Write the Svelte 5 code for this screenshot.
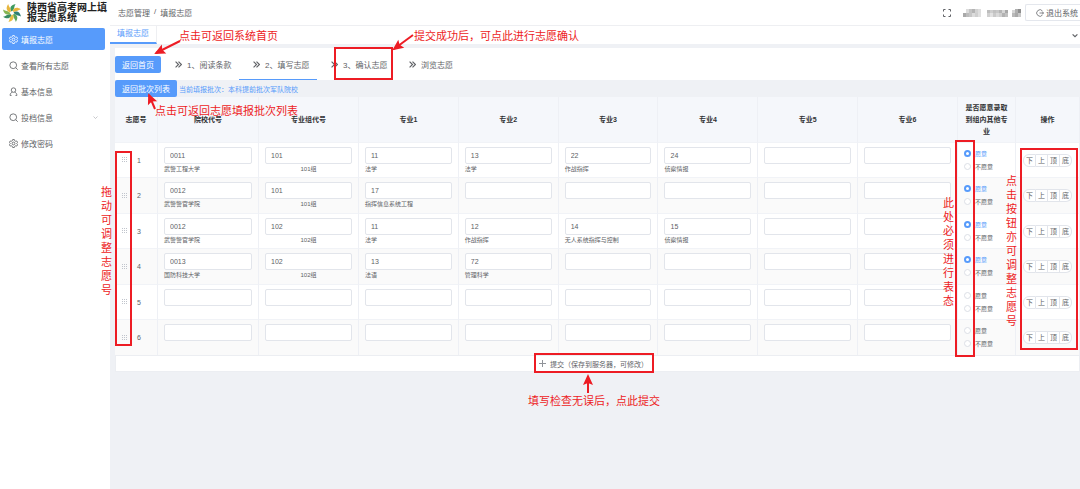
<script lang="ts">
	type Fila = {
		numero: number;
		escuela: [string, string];
		grupo: [string, string];
		majors: [string, string][];
		acepta: string;
	}

	const vacio: [string, string] = ['', ''];

	let filas: Fila[] = $state([
		{ numero: 1, escuela: ['0011', '武警工程大学'], grupo: ['101', '101组'], majors: [['11', '法学'], ['13', '法学'], ['22', '作战指挥'], ['24', '侦察情报'], vacio, vacio], acepta: '愿意' },
		{ numero: 2, escuela: ['0012', '武警警官学院'], grupo: ['101', '101组'], majors: [['17', '指挥信息系统工程'], vacio, vacio, vacio, vacio, vacio], acepta: '愿意' },
		{ numero: 3, escuela: ['0012', '武警警官学院'], grupo: ['102', '102组'], majors: [['11', '法学'], ['12', '作战指挥'], ['14', '无人系统指挥与控制'], ['15', '侦察情报'], vacio, vacio], acepta: '愿意' },
		{ numero: 4, escuela: ['0013', '国防科技大学'], grupo: ['102', '102组'], majors: [['13', '法语'], ['72', '管理科学'], vacio, vacio, vacio, vacio], acepta: '愿意' },
		{ numero: 5, escuela: vacio, grupo: vacio, majors: [vacio, vacio, vacio, vacio, vacio, vacio], acepta: '' },
		{ numero: 6, escuela: vacio, grupo: vacio, majors: [vacio, vacio, vacio, vacio, vacio, vacio], acepta: '' }
	]);

	const menu = [
		{ texto: '填报志愿', icono: 'gear' },
		{ texto: '查看所有志愿', icono: 'search' },
		{ texto: '基本信息', icono: 'user' },
		{ texto: '投档信息', icono: 'search', hijos: true },
		{ texto: '修改密码', icono: 'gear' }
	];

	const pasos = ['1、阅读条款', '2、填写志愿', '3、确认志愿', '浏览志愿'];
	const acciones = ['下', '上', '顶', '底'];
	const petalos = [0, 45, 90, 135, 180, 225, 270, 315];
	const colores = ['#3f9a5f', '#e9b53b', '#2d7f74', '#5ba55a', '#e8bd43', '#398b62', '#86b552', '#e7b63e'];

	// tonos del nombre de usuario oculto
	const mosaico = [
		[3, 0, '#dcdcdc'], [6, 0, '#c4c4c4'], [9, 0, '#b4b4b4'], [12, 0, '#d2d2d2'], [15, 0, '#dedede'],
		[0, 4, '#a9a9a9'], [3, 4, '#bcbcbc'], [6, 4, '#c6c6c6'], [9, 4, '#dcdcdc'], [12, 4, '#cfcfcf'], [15, 4, '#e0e0e0'],
		[24, 1, '#bdbdbd'], [27, 1, '#cecece'], [30, 1, '#c1c1c1'], [33, 1, '#c8c8c8'], [36, 1, '#b5b5b5'], [39, 1, '#d6d6d6'], [42, 1, '#a8a8a8'],
		[24, 4, '#d0d0d0'], [27, 4, '#e2e2e2'], [30, 4, '#cacaca'], [33, 4, '#dadada'], [36, 4, '#cecece'], [39, 4, '#b2b2b2'], [42, 4, '#c1c1c1'],
		[49, 1, '#d5d5d5'], [52, 0, '#b0b0b0'], [55, 0, '#8e8e8e'], [49, 4, '#b9b9b9'], [52, 4, '#a9a9a9'], [55, 4, '#c7c7c7']
	];

	function mover(i: number, accion: string): void {
		let destino = i;
		if (accion === '下') destino = Math.min(i + 1, filas.length - 1);
		if (accion === '上') destino = Math.max(i - 1, 0);
		if (accion === '顶') destino = 0;
		if (accion === '底') destino = filas.length - 1;
		const [fila] = filas.splice(i, 1);
		filas.splice(destino, 0, fila);
		filas.forEach((f, n) => (f.numero = n + 1));
	}
</script>

{#snippet icono(nombre: string)}
	<svg class="icono" viewBox="0 0 16 16" aria-hidden="true">
		{#if nombre === 'gear'}
			<path d="M6.5 1h3l.6 2 1.7 1 2-.5 1.500 2.600-1.400 1.500v1l1.400 1.400-1.500 2.600-2-.5-1.700 1-.6 2h-3l-.6-2-1.700-1-2 .5L.700 10l1.400-1.400v-1L.700 6.100l1.500-2.600 2 .5 1.700-1z" />
			<circle cx="8" cy="8" r="2.500" />
		{:else if nombre === 'search'}
			<circle cx="7.500" cy="7.500" r="6" />
			<path d="M12 12l3.500 3.500" />
		{:else}
			<circle cx="8" cy="5.500" r="4" />
			<path d="M2 15c0-3 1.500-5 4-6M14 15c0-3-1.500-5-4-6M2 15h2.500M11.500 15H14" />
		{/if}
	</svg>
{/snippet}

{#snippet casilla(valor: [string, string], etiqueta: string)}
	<input type="text" class="campo" value={valor[0]} aria-label={etiqueta} />
	<div class="nota">{valor[1]}</div>
{/snippet}

{#snippet flecha(x1: number, y1: number, x2: number, y2: number)}
	<path d="M{x1} {y1}L{x2} {y2}" />
	<path class="punta" d="M2 0L-9 -5L-7 0L-9 5Z" transform="translate({x2} {y2}) rotate({Math.atan2(y2 - y1, x2 - x1) * 180 / Math.PI})" />
{/snippet}

<div class="pantalla">
	<aside class="lateral">
		<div class="marca">
			<svg class="logo" viewBox="-10 -10 20 20" aria-hidden="true">
				{#each petalos as angulo, i}
					<path d="M-1 -2C-3 -6 -1 -9 4 -10C2 -7 3 -4 0 -2Z" fill={colores[i]} transform="rotate({angulo})" />
				{/each}
			</svg>
			<h1>陕西省高考网上填报志愿系统</h1>
		</div>
		<nav>
			{#each menu as m, i}
				<a href="#menu{i}" class="opcion" class:activa={i === 0}>
					{@render icono(m.icono)}
					<span>{m.texto}</span>
					{#if m.hijos}
						<svg class="flecha-menu" viewBox="0 0 10 6" aria-hidden="true"><path d="M1 1l4 4 4-4" /></svg>
					{/if}
				</a>
			{/each}
		</nav>
	</aside>

	<main>
		<header class="cabecera">
			<div class="migas">
				<a href="#gestion">志愿管理</a><span>/</span><span>填报志愿</span>
			</div>
			<div class="usuario">
				<svg class="expandir" viewBox="0 0 8 8" aria-hidden="true">
					<path d="M.500 2.500v-2h2M5.500.500h2v2M7.500 5.500v2h-2M2.500 7.500h-2v-2" />
				</svg>
				<svg class="mosaico" viewBox="0 0 58 8" aria-hidden="true">
					{#each mosaico as [x, y, color]}
						<rect {x} {y} width="3" height="4" fill={color} />
					{/each}
				</svg>
				<button class="salir">
					<svg viewBox="0 0 16 16" aria-hidden="true"><path d="M13 4A6.500 6.500 0 1 0 13 12M7 8h8M12.500 5.500L15 8l-2.500 2.500" /></svg>
					退出系统
				</button>
			</div>
		</header>

		<div class="pestanas">
			<a href="#llenar" class="pestana">填报志愿</a>
			<svg class="desplegar" viewBox="0 0 10 8" aria-hidden="true"><path d="M1 2l4 4 4-4" /></svg>
		</div>

		<div class="contenido">
			<div class="pasos">
				<button class="btn-primary">返回首页</button>
				{#each pasos as paso, i}
					<a href="#paso{i}" class="paso" class:actual={i === 1}>
						<svg viewBox="0 0 12 12" aria-hidden="true"><path d="M1 1l5 5-5 5M6 1l5 5-5 5" /></svg>
						{paso}
					</a>
				{/each}
			</div>

			<div class="lote">
				<button class="btn-primary">返回批次列表</button>
				<span>当前填报批次：本科提前批次军队院校</span>
			</div>

			<table>
				<colgroup>
					<col class="c-numero" />
					<col class="c-escuela" />
					<col class="c-grupo" />
					<col span="6" />
					<col class="c-acepta" />
					<col class="c-acciones" />
				</colgroup>
				<thead>
					<tr>
						<th>志愿号</th>
						<th>院校代号</th>
						<th>专业组代号</th>
						{#each [1, 2, 3, 4, 5, 6] as n}
							<th>专业{n}</th>
						{/each}
						<th>是否愿意录取到组内其他专业</th>
						<th>操作</th>
					</tr>
				</thead>
				<tbody>
					{#each filas as fila, i (fila)}
						<tr>
							<td class="orden">
								<div>
									<svg viewBox="0 0 5 6" aria-hidden="true">
										{#each [0, 2, 4] as y}
											<path d="M0 {y}h1v1h-1zM2 {y}h1v1h-1zM4 {y}h1v1h-1z" />
										{/each}
									</svg>
									<span>{fila.numero}</span>
								</div>
							</td>
							<td>{@render casilla(fila.escuela, '院校代号')}</td>
							<td class="grupo">{@render casilla(fila.grupo, '专业组代号')}</td>
							{#each fila.majors as major, n}
								<td>{@render casilla(major, `专业${n + 1}`)}</td>
							{/each}
							<td class="acepta">
								{#each ['愿意', '不愿意'] as opcion}
									<label class:elegida={fila.acepta === opcion}>
										<input type="radio" value={opcion} bind:group={fila.acepta} />
										{opcion}
									</label>
								{/each}
							</td>
							<td class="acciones">
								<div>
									{#each acciones as accion}
										<button onclick={() => mover(i, accion)}>{accion}</button>
									{/each}
								</div>
							</td>
						</tr>
					{/each}
				</tbody>
			</table>

			<button class="enviar">
				<svg viewBox="0 0 7 7" aria-hidden="true"><path d="M3.500 0v7M0 3.500h7" /></svg>
				提交（保存到服务器，可修改）
			</button>
		</div>
	</main>

	<!-- Indicaciones en rojo sobre la pantalla -->
	<svg class="marcas" width="1080" height="489" aria-hidden="true">
		<rect x="335" y="48" width="57" height="31" />
		<rect x="116" y="152" width="15" height="193" />
		<rect x="956" y="141" width="18" height="215" />
		<rect x="1021" y="149" width="56" height="200" />
		<rect x="535" y="354" width="118" height="18" />
		{@render flecha(180, 41, 156, 53)}
		{@render flecha(155, 109, 149, 95)}
		{@render flecha(413, 35, 394, 49)}
		{@render flecha(588, 393, 588, 376)}
	</svg>
	<p class="aviso inicio">点击可返回系统首页</p>
	<p class="aviso confirmar">提交成功后，可点此进行志愿确认</p>
	<p class="aviso lista">点击可返回志愿填报批次列表</p>
	<p class="aviso guardar">填写检查无误后，点此提交</p>
	<p class="aviso vertical arrastrar">拖动可调整志愿号</p>
	<p class="aviso vertical expresar">此处必须进行表态</p>
	<p class="aviso vertical ajustar">点击按钮亦可调整志愿号</p>
</div>

<style>
	:global(body) {
		background: #eff1f5;
	}

	.pantalla {
		position: relative;
		display: flex;
		min-height: 100vh;
		overflow: hidden;
		font-family: "Liberation Sans", "Noto Sans CJK SC", sans-serif;
		font-size: 7px;
		color: #606266;
	}

	a {
		color: inherit;
		text-decoration: none;
	}

	button, input {
		font-family: inherit;
		color: inherit;
		box-sizing: border-box;
		margin: 0;
	}

	button {
		cursor: pointer;
	}

	svg {
		fill: none;
		stroke: currentColor;
		flex-shrink: 0;
	}

	/* Menu lateral */
	.lateral {
		width: 110px;
		flex-shrink: 0;
		background: white;
	}

	.marca {
		display: flex;
		align-items: center;
		gap: 6px;
		height: 26px;
		padding-left: 3px;
		margin-bottom: 2px;
	}

	.logo {
		width: 18px;
		height: 18px;
		stroke: none;
	}

	.marca h1 {
		margin: 0;
		font-size: 10px;
		line-height: 10px;
		font-weight: bold;
		color: #222;
	}

	.opcion {
		display: flex;
		align-items: center;
		gap: 3px;
		height: 26px;
		margin: 0 5px 0 2px;
		padding: 0 7px;
		font-size: 8px;
	}

	.opcion.activa {
		height: 22px;
		margin-bottom: 2px;
		border-radius: 2px;
		background: #579bfb;
		color: white;
	}

	.icono {
		width: 9px;
		height: 9px;
		stroke-width: 1.5;
	}

	.flecha-menu {
		width: 5px;
		height: 3px;
		margin-left: auto;
		color: #909399;
	}

	/* Cabecera y pestanas */
	main {
		flex: 1;
		min-width: 0;
	}

	.cabecera {
		display: flex;
		justify-content: space-between;
		align-items: center;
		height: 25px;
		padding-left: 8px;
		background: white;
		border-bottom: 1px solid #eeeff2;
	}

	.migas {
		display: flex;
		gap: 4px;
	}

	.migas, .salir {
		font-size: 8px;
	}

	.usuario {
		display: flex;
		align-items: center;
	}

	.expandir {
		width: 8px;
		height: 8px;
		margin-right: 12px;
	}

	.mosaico {
		width: 58px;
		height: 8px;
		margin-right: 4px;
		stroke: none;
	}

	.salir {
		display: flex;
		align-items: center;
		gap: 2px;
		height: 17px;
		padding: 0 2px 0 10px;
		border: 1px solid #e4e7ed;
		border-right: 0;
		border-radius: 2px 0 0 2px;
		background: white;
	}

	.salir svg {
		width: 8px;
		height: 8px;
		stroke-width: 1.5;
	}

	.pestanas {
		display: flex;
		justify-content: space-between;
		align-items: center;
		height: 18px;
		background: white;
	}

	.pestana {
		padding: 0 7px;
		line-height: 16px;
		font-size: 8px;
		color: #579bfb;
		border-right: 1px solid #eeeff2;
		border-bottom: 2px solid #579bfb;
	}

	.desplegar {
		width: 6px;
		height: 5px;
		margin-right: 2px;
		stroke-width: 2;
	}

	.contenido {
		padding: 4px 0 0 5px;
	}

	/* Pasos */
	.pasos {
		display: flex;
		align-items: center;
		height: 32px;
		background: white;
	}

	.btn-primary {
		height: 17px;
		padding: 0 7px;
		border: 0;
		border-radius: 2px;
		background: #579bfb;
		color: white;
		font-size: 8px;
	}

	.paso {
		display: flex;
		align-items: center;
		gap: 5px;
		width: 78px;
		height: 32px;
		padding-left: 14px;
		box-sizing: border-box;
		border-top: 1px solid transparent;
		border-bottom: 1px solid transparent;
		font-size: 8px;
		white-space: nowrap;
	}

	.paso svg {
		width: 7px;
		height: 7px;
		stroke-width: 2;
	}

	.paso.actual {
		border-bottom-color: #579bfb;
	}

	.lote {
		display: flex;
		align-items: center;
		gap: 2px;
		height: 17px;
		color: #579bfb;
	}

	/* Tabla de opciones */
	table {
		width: 100%;
		table-layout: fixed;
		border-collapse: separate;
		border-spacing: 0;
		background: white;
	}

	.c-numero { width: 43px; }
	.c-escuela { width: 101px; }
	.c-grupo { width: 100px; }
	.c-acepta { width: 58px; }
	.c-acciones { width: 64px; }

	th {
		height: 45px;
		padding: 0 6px;
		box-sizing: border-box;
		line-height: 12px;
		background: #f5f7fb;
		color: #303133;
		border-right: 1px solid #eef0f5;
	}

	td {
		height: 35px;
		padding: 4px 6px 0;
		box-sizing: border-box;
		vertical-align: top;
		border-right: 1px solid #eef0f5;
		border-top: 1px solid #f1f3f7;
	}

	tr:nth-child(even) td {
		height: 36px;
		background: #fafafa;
	}

	.campo {
		display: block;
		width: 100%;
		height: 17px;
		padding: 0 5px;
		border: 1px solid #e2e5eb;
		border-radius: 2px;
		background: white;
		font-size: 7px;
	}

	.nota {
		height: 11px;
		line-height: 11px;
		font-size: 6px;
		white-space: nowrap;
	}

	.grupo .nota {
		text-align: center;
	}

	.orden, .acciones {
		padding: 0 7px;
		vertical-align: middle;
	}

	.orden div {
		display: flex;
		align-items: center;
		gap: 10px;
	}

	.orden svg {
		width: 5px;
		height: 6px;
		stroke: none;
		fill: #c0c4cc;
	}

	.acepta label {
		display: flex;
		align-items: center;
		gap: 4px;
		height: 13px;
		font-size: 6px;
	}

	.acepta label.elegida {
		color: #579bfb;
	}

	.acepta input {
		appearance: none;
		width: 7px;
		height: 7px;
		border: 1px solid #dcdfe6;
		border-radius: 50%;
		background: white;
	}

	.acepta input:checked {
		border: 2px solid #579bfb;
	}

	.acciones div {
		display: flex;
	}

	.acciones button {
		width: 12px;
		height: 13px;
		padding: 0;
		border: 1px solid #e2e5eb;
		border-left-width: 0;
		background: white;
		font-size: 7px;
		line-height: 11px;
	}

	.acciones button:first-child {
		width: 13px;
		border-left-width: 1px;
		border-radius: 6px 0 0 6px;
	}

	.acciones button:last-child {
		border-radius: 0 6px 6px 0;
	}

	.enviar {
		display: flex;
		justify-content: center;
		align-items: center;
		gap: 4px;
		width: 100%;
		height: 17px;
		padding: 0 8px 0 0;
		border: 1px solid #eceef2;
		background: white;
		font-size: 7px;
	}

	.enviar svg {
		width: 7px;
		height: 7px;
		stroke: #909399;
	}

	/* Indicaciones */
	.marcas {
		position: absolute;
		top: 0;
		left: 0;
		stroke: #ed1c24;
		stroke-width: 2;
		pointer-events: none;
	}

	.marcas .punta {
		stroke: none;
		fill: #ed1c24;
	}

	.aviso {
		position: absolute;
		margin: 0;
		font-size: 11px;
		line-height: 14px;
		color: #ed1c24;
		white-space: nowrap;
		pointer-events: none;
	}

	.vertical {
		width: 11px;
		white-space: normal;
		word-break: break-all;
	}

	.inicio { left: 179px; top: 29px; }
	.confirmar { left: 414px; top: 29px; }
	.lista { left: 155px; top: 104px; }
	.guardar { left: 528px; top: 394px; }
	.arrastrar { left: 101px; top: 185px; }
	.expresar { left: 943px; top: 196px; }
	.ajustar { left: 1006px; top: 174px; }
</style>
